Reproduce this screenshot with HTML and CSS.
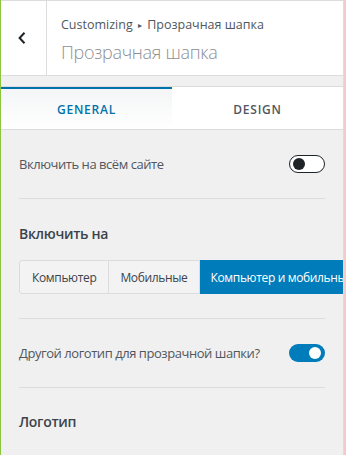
FILE: index.html
```html
<!DOCTYPE html>
<html lang="ru">
<head>
<meta charset="utf-8">
<link rel="stylesheet" href="styles.css">
</head>
<body>
<div class="frame">
  <div class="panel">
    <header class="head">
      <button class="back" aria-label="Назад">
        <svg width="10" height="14" viewBox="0 0 10 14"><path d="M7.5 1.8 L2.6 7 L7.5 12.2" fill="none" stroke="#1d2327" stroke-width="2"/></svg>
      </button>
      <div class="titles">
        <div class="crumb">Customizing <span class="tri">▸</span> Прозрачная шапка</div>
        <h3 class="title">Прозрачная шапка</h3>
      </div>
    </header>
    <nav class="tabs">
      <div class="tab active">GENERAL</div>
      <div class="tab">DESIGN</div>
    </nav>
    <section class="content">
      <div class="row">
        <span class="label">Включить на всём сайте</span>
        <span class="toggle off"><span class="knob"></span></span>
      </div>
      <hr class="sep">
      <div class="block">
        <div class="heading">Включить на</div>
        <div class="group">
          <span class="opt">Компьютер</span>
          <span class="opt">Мобильные</span>
          <span class="opt sel">Компьютер и мобильные</span>
        </div>
      </div>
      <hr class="sep">
      <div class="row">
        <span class="label">Другой логотип для прозрачной шапки?</span>
        <span class="toggle on"><span class="knob"></span></span>
      </div>
      <hr class="sep">
      <div class="block last">
        <div class="heading">Логотип</div>
      </div>
    </section>
  </div>
  <div class="edge"></div>
</div>
</body>
</html>
```
FILE: styles.css
```css
* { box-sizing: border-box; }
html, body { margin: 0; padding: 0; }
body {
  font-family: "Open Sans", "Noto Sans", sans-serif;
  background: #f0f0f1;
  width: 346px;
  height: 455px;
  overflow: hidden;
}
.frame {
  display: flex;
  height: 455px;
}
.panel {
  width: 344px;
  border-left: 1px solid #8cc63f;
  border-right: 1px solid #dcdcde;
  background: #f0f0f1;
  overflow: hidden;
}
.edge {
  width: 2px;
  background: #f3c9c9;
}
.head {
  display: flex;
  height: 76px;
  background: #fff;
  border-top: 1px solid #dcdcde;
  border-bottom: 1px solid #dcdcde;
}
.back {
  width: 46px;
  border: 0;
  border-right: 1px solid #dcdcde;
  background: #fff;
  padding: 0 3px 0 0;
  display: flex;
  align-items: center;
  justify-content: center;
}
.titles {
  padding: 13px 0 0 14px;
}
.crumb {
  font-size: 12.5px;
  line-height: 22px;
  color: #50575e;
}
.tri { font-size: 8px; position: relative; top: -1px; padding: 0 2px; }
.title {
  margin: 0;
  font-size: 18px;
  font-weight: 300;
  line-height: 30px;
  letter-spacing: -0.3px;
  color: #8c8f94;
}
.tabs {
  display: flex;
  margin-top: 10px;
  border-top: 1px solid #dcdcde;
  border-bottom: 1px solid #dcdcde;
  background: #fff;
}
.tab {
  flex: 1;
  height: 42px;
  display: flex;
  align-items: center;
  justify-content: center;
  font-size: 12px;
  font-weight: 600;
  letter-spacing: 0.8px;
  color: #50575e;
  border-top: 2px solid transparent;
}
.tab.active {
  color: #0073aa;
  border-top-color: #0073aa;
  background: linear-gradient(#f4f5f6, #fff);
}
.content {
  padding: 0 18px;
}
.row {
  display: flex;
  align-items: center;
  justify-content: space-between;
  height: 68px;
}
.label {
  font-size: 13px;
  letter-spacing: -0.45px;
  color: #50575e;
}
.sep {
  margin: 0;
  border: 0;
  border-top: 1px solid #dcdcde;
}
.toggle {
  width: 36px;
  height: 18px;
  border-radius: 9px;
  display: flex;
  align-items: center;
  padding: 0 3px;
}
.toggle.off {
  border: 1.5px solid #1d2327;
  background: #fff;
}
.toggle.off .knob {
  width: 12px; height: 12px;
  border-radius: 50%;
  background: #1d2327;
}
.toggle.on {
  background: #007cba;
  justify-content: flex-end;
  padding: 0 4px;
}
.toggle.on .knob {
  width: 12px; height: 12px;
  border-radius: 50%;
  background: #fff;
}
.block {
  padding-top: 26px;
  padding-bottom: 24px;
}
.block.last { padding-top: 25px; }
.heading {
  font-size: 14px;
  font-weight: 600;
  color: #3c434a;
  line-height: 18px;
  letter-spacing: -0.3px;
}
.group {
  display: flex;
  margin-top: 17px;
  width: max-content;
}
.opt {
  height: 34px;
  display: flex;
  align-items: center;
  padding: 0 12px;
  font-size: 12px;
  letter-spacing: -0.35px;
  color: #3c434a;
  background: #f3f3f4;
  border: 1px solid #dcdcde;
  white-space: nowrap;
}
.opt + .opt { border-left: 0; padding: 0 11px; }
.opt:first-child { border-radius: 3px 0 0 3px; }
.opt.sel {
  background: #007cba;
  border-color: #007cba;
  color: #fff;
}
```
